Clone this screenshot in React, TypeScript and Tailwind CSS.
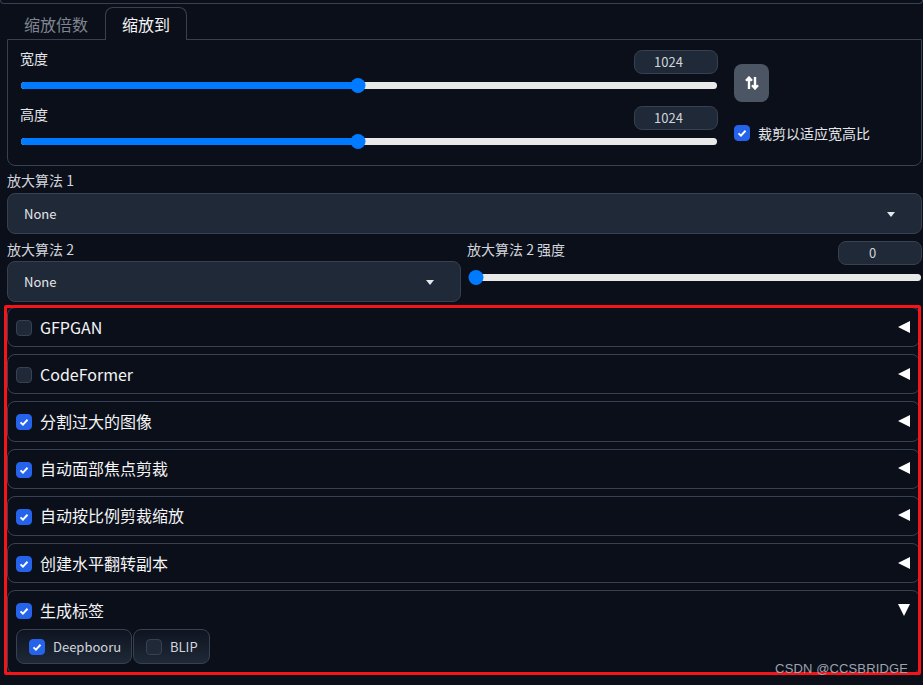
import type { ReactNode } from 'react';

function Check({ on, className = '' }: { on: boolean; className?: string }) {
  return (
    <span
      className={`flex h-4 w-4 shrink-0 items-center justify-center rounded-[4px] border ${
        on ? 'border-[#2563eb] bg-[#2563eb]' : 'border-[#374151] bg-[#1f2937]'
      } ${className}`}
    >
      {on && (
        <svg viewBox="0 0 16 16" className="h-4 w-4">
          <path d="M4 8.4 L6.8 11 L12 5.4" fill="none" stroke="#fff" strokeWidth="2.2" />
        </svg>
      )}
    </span>
  );
}

function Slider({ percent }: { percent: number }) {
  return (
    <div className="relative mr-px h-[7px] rounded-full bg-[#e9e9e9]">
      <div className="h-full rounded-full bg-[#007bff]" style={{ width: `${percent}%` }} />
      <div
        className="absolute top-[-4px] h-[15px] w-[15px] -translate-x-1/2 rounded-full bg-[#007bff]"
        style={{ left: `${percent}%` }}
      />
    </div>
  );
}

function NumberBox({ value }: { value: string }) {
  return (
    <div className="flex h-6 w-[84px] items-center justify-center rounded-lg border border-[#374151] bg-[#1f2937] pr-[15px] text-[13px] text-[#d1d5db]">
      {value}
    </div>
  );
}

function Select({ className }: { className: string }) {
  return (
    <div
      className={`flex h-[41px] items-center justify-between rounded-lg border border-[#374151] bg-[#1f2937] pl-4 pr-[26px] text-[13px] text-[#e5e7eb] ${className}`}
    >
      None
      <svg viewBox="0 0 8 5" className="mt-px h-[5px] w-2">
        <polygon points="0,0 8,0 4,5" fill="#e5e7eb" />
      </svg>
    </div>
  );
}

function Accordion({ on, label, children }: { on: boolean; label: string; children?: ReactNode }) {
  return (
    <div className={`rounded-lg border border-[#374151] pl-2 pr-[9px] ${children ? 'h-[84px]' : 'h-[40.2px]'}`}>
      <div className="flex h-[38.2px] items-center gap-2 text-base text-[#f3f4f6]">
        <Check on={on} className="mt-[2px]" />
        <span className="-mt-px">{label}</span>
        <svg viewBox="0 0 12 12" className="mb-[1px] ml-auto h-3 w-3">
          <polygon points={children ? '0,0 12,0 6,12' : '12,0 12,12 0,6'} fill="#fff" />
        </svg>
      </div>
      {children}
    </div>
  );
}

function ChipToggle({ on, label, className }: { on: boolean; label: string; className: string }) {
  return (
    <div
      className={`flex h-[35px] items-center gap-2 rounded-lg border border-[#374151] bg-gradient-to-b from-[#0f1421] to-[#1f2937] pl-3 text-[13px] text-[#d1d5db] ${className}`}
    >
      <Check on={on} />
      {label}
    </div>
  );
}

const rows = [
  { label: 'GFPGAN', on: false },
  { label: 'CodeFormer', on: false },
  { label: '分割过大的图像', on: true },
  { label: '自动面部焦点剪裁', on: true },
  { label: '自动按比例剪裁缩放', on: true },
  { label: '创建水平翻转副本', on: true },
];

export default function App() {
  return (
    <div className="relative h-[685px] w-[923px] overflow-hidden bg-[#0b0f19] font-['Noto_Sans_CJK_SC','Liberation_Sans',sans-serif] text-[#e5e7eb]">
      <div className="h-1 rounded-b-lg border-b border-x border-[#374151]" />

      {/* 缩放タブ */}
      <div className="ml-[7px] mr-[1px] mt-[3px]">
        <div className="flex h-[33px] items-stretch">
          <div className="flex w-[98px] items-center justify-center text-base text-[#7f8590]">缩放倍数</div>
          <div className="relative z-10 flex h-[33px] w-[82px] items-center justify-center rounded-t-lg border border-b-0 border-[#374151] bg-[#0b0f19] text-base text-[#f3f4f6]">
            缩放到
          </div>
        </div>
        <div className="-mt-px flex h-[127px] gap-4 rounded-b-lg border border-[#374151] pl-[13px] pr-[15px]">
          <div className="w-[697px] shrink-0 pt-[10px]">
            <div className="flex h-6 items-center justify-between">
              <span className="-ml-px -mt-2 text-sm text-[#e5e7eb]">宽度</span>
              <NumberBox value="1024" />
            </div>
            <div className="mt-2">
              <Slider percent={48.4} />
            </div>
            <div className="mt-[17px] flex h-6 items-center justify-between">
              <span className="-ml-px -mt-2 text-sm text-[#e5e7eb]">高度</span>
              <NumberBox value="1024" />
            </div>
            <div className="mt-2">
              <Slider percent={48.4} />
            </div>
          </div>
          <div className="pt-[24px]">
            <div className="flex h-[38px] w-[35px] items-center justify-center rounded-lg bg-[#4b5563]">
              <svg viewBox="0 0 14 14" className="h-[14px] w-[14px]" fill="none" stroke="#fff" strokeWidth="2.4">
                <path d="M4 13 V2 M1 4.8 L4 1.6 L7 4.8" />
                <path d="M10 1 V12 M7 9.2 L10 12.4 L13 9.2" />
              </svg>
            </div>
            <div className="mt-[21px] flex items-center gap-2 whitespace-nowrap text-sm text-[#e5e7eb]">
              <Check on />
              裁剪以适应宽高比
            </div>
          </div>
        </div>
      </div>

      {/* 放大算法 */}
      <div className="ml-[7px] mr-[1px]">
        <div className="mt-[4px] h-[23px] text-sm leading-[21px] text-[#d1d5db]">放大算法 1</div>
        <Select className="w-full" />
        <div className="mt-[7px] flex gap-[6px]">
          <div className="w-[454px] shrink-0">
            <div className="-mt-[2px] h-[22px] text-sm leading-[20px] text-[#d1d5db]">放大算法 2</div>
            <Select className="w-full" />
          </div>
          <div className="min-w-0 flex-1">
            <div className="flex h-6 items-center justify-between">
              <span className="-mt-2 text-sm text-[#d1d5db]">放大算法 2 强度</span>
              <NumberBox value="0" />
            </div>
            <div className="ml-[2px] mt-[9px]">
              <Slider percent={1.5} />
            </div>
          </div>
        </div>
      </div>

      {/* 折りたたみ */}
      <div className="ml-[7px] mr-[3px] mt-[5px] flex flex-col gap-[7px]">
        {rows.map((row) => (
          <Accordion key={row.label} on={row.on} label={row.label} />
        ))}
        <Accordion on label="生成标签">
          <div className="flex gap-px">
            <ChipToggle on label="Deepbooru" className="w-[116px]" />
            <ChipToggle on={false} label="BLIP" className="w-[77px]" />
          </div>
        </Accordion>
      </div>

      {/* 注釈の赤枠と透かし */}
      <div className="absolute left-[4px] top-[305px] h-[370px] w-[917px] rounded-[2px] border-[3px] border-[#f5141a]" />
      <div className="absolute right-[15px] top-[659px] font-['Liberation_Sans',sans-serif] text-[13px] leading-[20px] tracking-[0.13px] text-[#9ca3af]">
        CSDN @CCSBRIDGE
      </div>
    </div>
  );
}
